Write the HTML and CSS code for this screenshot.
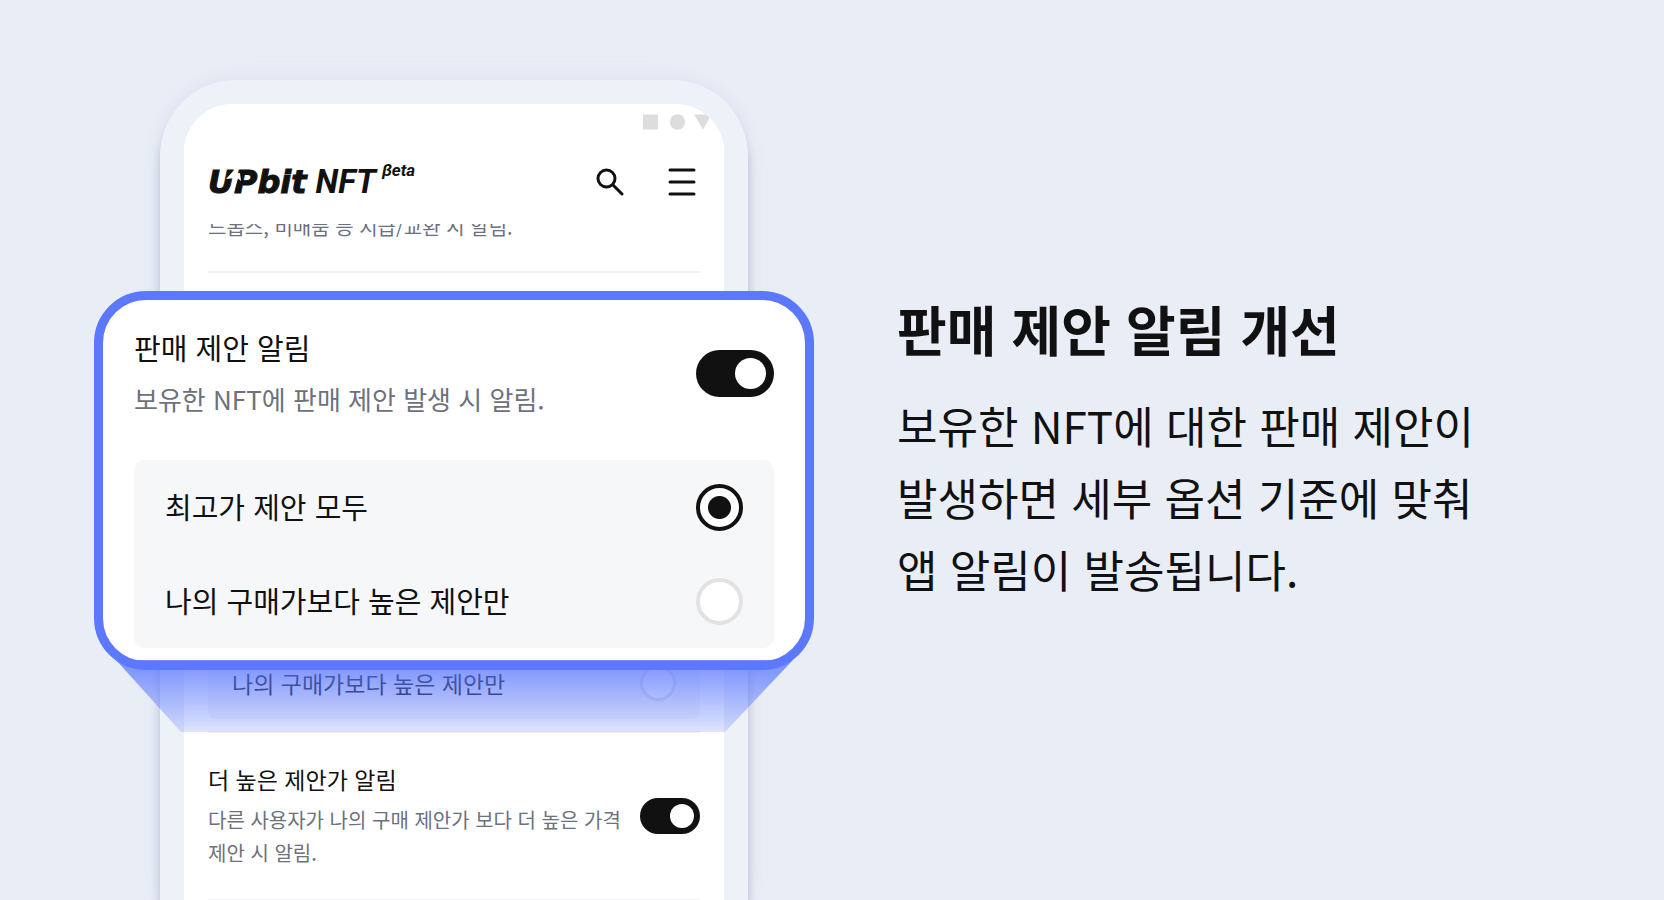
FILE: index.html
```html
<!DOCTYPE html>
<html lang="ko">
<head>
<meta charset="utf-8">
<meta name="viewport" content="width=device-width, initial-scale=1">
<title>판매 제안 알림 개선</title>
<link rel="stylesheet" href="styles.css">
</head>
<body>
<main class="page">
  <section class="stage">
    <div class="phone">
      <div class="screen">
        <svg class="status" width="70" height="16" viewBox="0 0 70 16" aria-hidden="true">
          <path d="M0 .5h15v15H0z"/><circle cx="34.500" cy="8" r="7.700"/><path d="M51 .5h17.500L60 15.500z"/>
        </svg>
        <header class="bar">
          <a class="logo" href="#"><span class="logo-up">UPbit<svg class="logo-cut" width="20" height="26" viewBox="0 0 20 26" aria-hidden="true"><path d="M0 10 9 0h2L9 5l5-1 1 8-3-2.500L7 26H5L9.500 9z"/></svg></span><span class="logo-nft">NFT</span><sup class="logo-beta">βeta</sup></a>
          <div class="actions">
            <button class="icon" type="button" aria-label="검색">
              <svg width="28" height="28" viewBox="0 0 28 28"><circle cx="10.500" cy="10.500" r="8.500"/><path d="m17 17 9 9"/></svg>
            </button>
            <button class="icon" type="button" aria-label="메뉴">
              <svg width="28" height="28" viewBox="0 0 28 28"><path d="M2 2h24M2 14h24M2 26h24"/></svg>
            </button>
          </div>
        </header>
        <div class="item item-drops"><p class="desc">드롭스, 비매품 등 지급/교환 시 알림.</p></div>
        <div class="item item-offer">
          <div class="panel">
            <label class="option"><span>나의 구매가보다 높은 제안만</span><input class="radio" type="radio" name="offer-list"></label>
          </div>
        </div>
        <div class="item item-higher">
          <div class="copy">
            <label class="title" for="higher">더 높은 제안가 알림</label>
            <p class="desc">다른 사용자가 나의 구매 제안가 보다 더 높은 가격 제안 시 알림.</p>
          </div>
          <input class="toggle" type="checkbox" role="switch" id="higher" checked>
        </div>
      </div>
    </div>

    <div class="callout">
      <div class="callout-head">
        <div class="copy">
          <label class="title" for="offer">판매 제안 알림</label>
          <p class="desc">보유한 NFT에 판매 제안 발생 시 알림.</p>
        </div>
        <input class="toggle" type="checkbox" role="switch" id="offer" checked>
      </div>
      <div class="panel">
        <label class="option"><span>최고가 제안 모두</span><input class="radio" type="radio" name="offer-zoom" checked></label>
        <label class="option"><span>나의 구매가보다 높은 제안만</span><input class="radio" type="radio" name="offer-zoom"></label>
      </div>
    </div>
    <div class="beam"></div>
  </section>

  <section class="message">
    <h1>판매 제안 알림 개선</h1>
    <p>보유한 NFT에 대한 판매 제안이<br>발생하면 세부 옵션 기준에 맞춰<br>앱 알림이 발송됩니다.</p>
  </section>
</main>
</body>
</html>
```
FILE: styles.css
```css
* { box-sizing: border-box; }

body {
  margin: 0;
  background: #e9eef6;
  color: #111;
  font-family: "Noto Sans CJK KR", "Noto Sans", sans-serif;
}

h1, p { margin: 0; }

input { appearance: none; margin: 0; flex: none; }

.page {
  display: grid;
  grid-template-columns: minmax(0, 720px) minmax(0, 1fr);
  column-gap: 83px;
  height: 100vh;
  min-height: 900px;
  padding: 80px 94px 0;
  overflow: hidden;
}

/* Phone */
.stage { position: relative; padding: 0 66px; }

.phone {
  height: 100%;
  padding: 24px 24px 0;
  border-radius: 76px 76px 0 0;
  background: #edf1f8;
  box-shadow: 0 12px 8px rgba(50, 50, 100, 0.24), 0 0 28px rgba(110, 120, 200, 0.1);
}

.screen {
  display: flex;
  flex-direction: column;
  height: 100%;
  border-radius: 48px 48px 0 0;
  background: #fff;
  overflow: hidden;
}

.status { align-self: flex-end; flex: none; margin: 10px 11px 0; fill: #ddd; }

.bar {
  position: relative;
  z-index: 1;
  display: flex;
  flex: none;
  align-items: center;
  justify-content: space-between;
  height: 94px;
  padding: 10px 28px 0 24px;
  background: #fff;
}

.logo {
  display: flex;
  align-items: center;
  color: #111;
  line-height: 32px;
  text-decoration: none;
}

.logo-up {
  position: relative;
  font: italic bold 32px/32px "DejaVu Sans", sans-serif;
  -webkit-text-stroke: 1px #111;
}

.logo-cut { position: absolute; top: 3px; left: 18px; fill: #fff; }
.logo-nft { margin-left: 9px; font: italic bold 33px/32px Roboto, sans-serif; }
.logo-beta { align-self: flex-start; margin: -4px 0 0 6px; font: italic bold 17px/16px Roboto, sans-serif; }

.actions { display: flex; gap: 44px; }

.icon { display: flex; padding: 0; border: 0; background: none; }
.icon svg { fill: none; stroke: #111; stroke-width: 3; stroke-linecap: round; }

.item {
  flex: none;
  margin: 0 24px;
  border-bottom: 2px solid #f1f1f3;
}

.item-drops { height: 49px; }
.item-drops .desc { margin-top: -14px; }

.item-offer { padding: 302px 0 12px; }
.item-offer .panel { display: flex; height: 144px; align-items: flex-end; }

.item-higher {
  display: flex;
  align-items: center;
  justify-content: space-between;
  padding: 30px 0;
}

.title { display: block; font-size: 23px; line-height: 32px; }
.desc { color: #6d717e; font-size: 20px; line-height: 33px; word-break: keep-all; }
.item-higher .desc { margin-top: 8px; }

.panel { border-radius: 8px; background: #f6f7f9; }

.option {
  display: flex;
  flex: 1;
  align-items: center;
  justify-content: space-between;
  height: 72px;
  padding: 0 24px;
  font-size: 23px;
}

.radio {
  width: 36px;
  height: 36px;
  border: 3px solid #e2e2e4;
  border-radius: 50%;
  background: #fff;
}

.toggle {
  display: flex;
  align-items: center;
  justify-content: flex-end;
  width: 60px;
  height: 36px;
  padding: 6px;
  border-radius: 24px;
  background: #111;
}

.toggle::before {
  content: "";
  width: 24px;
  height: 24px;
  border-radius: 50%;
  background: #fff;
}

/* Enlarged settings card over the phone */
.callout {
  position: absolute;
  top: 211px;
  right: 0;
  left: 0;
  padding: 23px 31px 13px;
  border: 9px solid #5b78ff;
  border-radius: 52px;
  background: #fff;
}

.callout-head { display: flex; align-items: center; justify-content: space-between; }
.callout .title { font-size: 29px; line-height: 48px; }
.callout .desc { margin-top: 4px; font-size: 26px; line-height: 48px; }
.callout .toggle { width: 78px; height: 47px; padding: 8px; }
.callout .toggle::before { width: 31px; height: 31px; }
.callout .panel { margin-top: 37px; border-radius: 10px; }
.callout .option { height: 94px; padding: 0 31px; font-size: 29px; }
.callout .option span { padding-bottom: 2px; }
.callout .radio { width: 47px; height: 47px; border-width: 4px; }
.callout .radio:checked {
  border-color: #111;
  background: radial-gradient(circle, #111 11px, #fff 12px);
}

.beam {
  position: absolute;
  top: 580px;
  right: 21px;
  left: 22px;
  height: 72px;
  background: linear-gradient(rgba(91, 120, 255, 0.82), rgba(91, 120, 255, 0.2));
  clip-path: polygon(0 0, 100% 0, calc(100% - 68px) 100%, 65px 100%);
}

/* Announcement */
.message { padding-top: 213px; }
.message h1 { font-size: 54px; font-weight: 700; line-height: 72px; white-space: nowrap; }
.message p { margin-top: 24px; font-size: 44px; line-height: 72px; white-space: nowrap; }
```
